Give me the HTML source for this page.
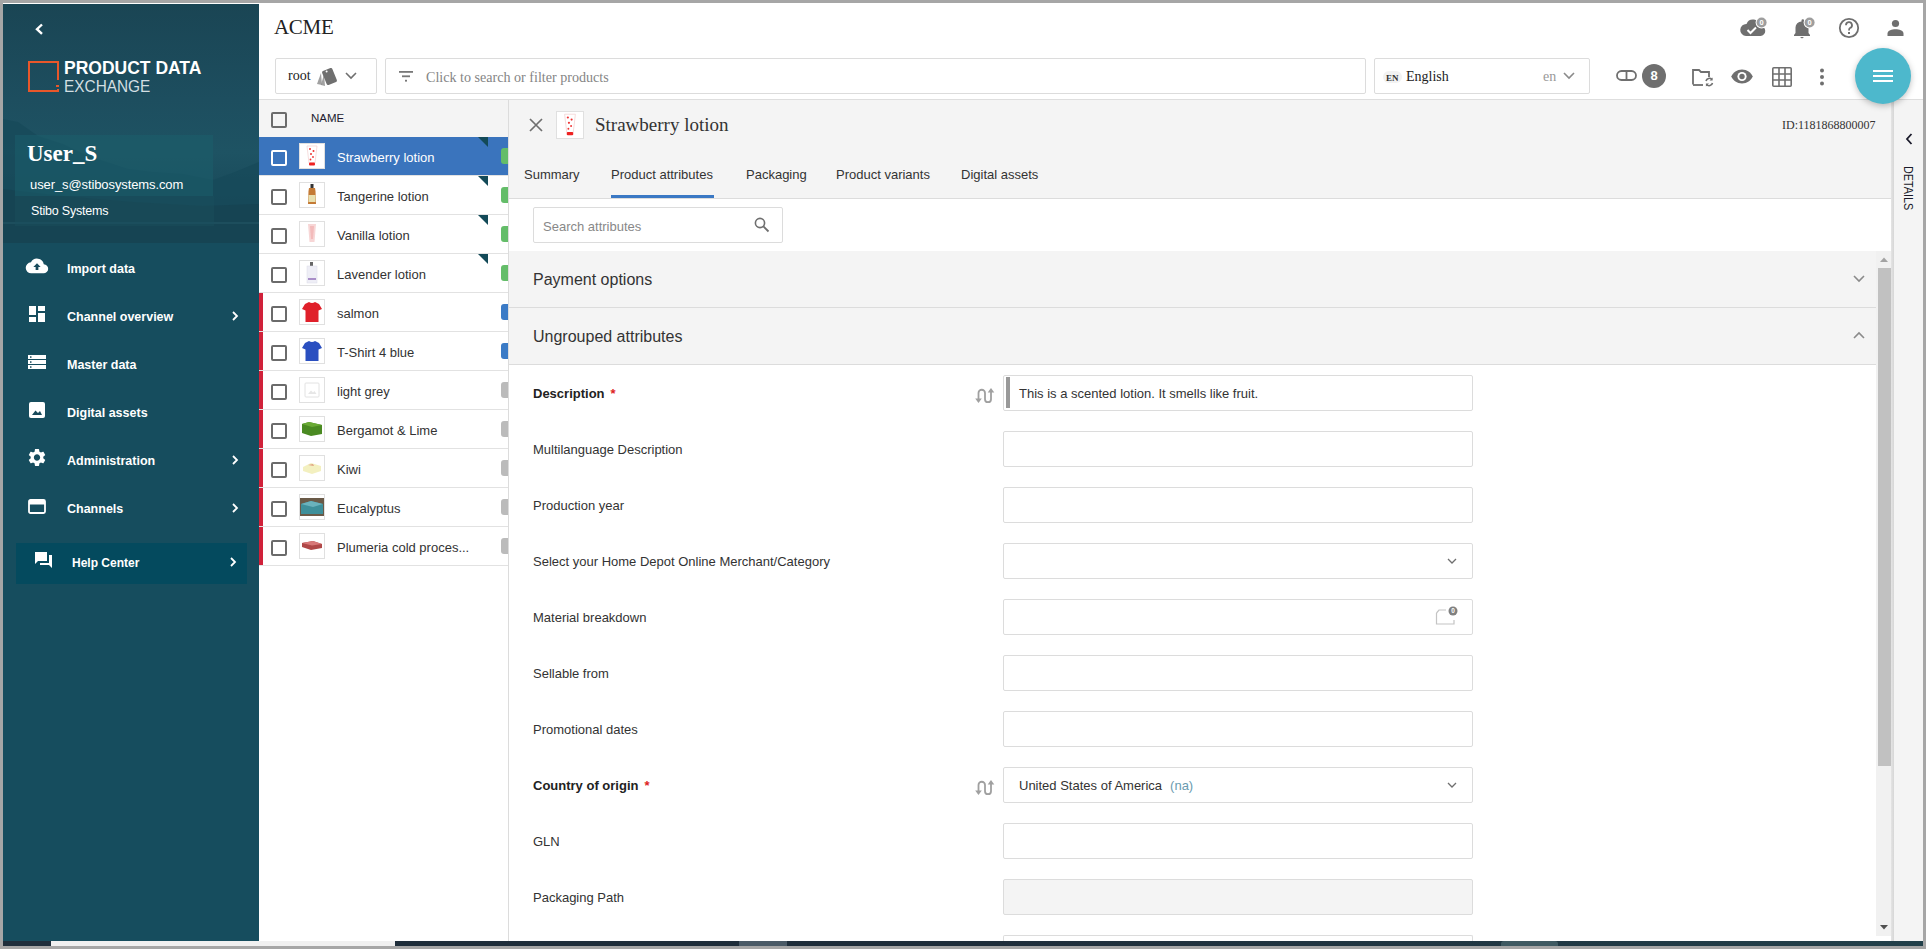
<!DOCTYPE html>
<html><head><meta charset="utf-8">
<style>
*{box-sizing:border-box;margin:0;padding:0}
html,body{width:1926px;height:949px;overflow:hidden;background:#a6a6a6}
body{position:relative;font-family:"Liberation Sans",sans-serif;color:#333}
.a{position:absolute;white-space:nowrap}
.serif{font-family:"Liberation Serif",serif}
svg{position:absolute;overflow:visible}
/* frame */
#pagebg{position:absolute;left:3px;top:3px;width:1920px;height:938px;background:#fff}
#side{position:absolute;left:3px;top:4px;width:256px;height:937px;background:#164d5e;overflow:hidden}
#taskbar{position:absolute;left:3px;top:941px;width:1920px;height:5px;background:#1f2e3b}
/* sidebar */
.nav{position:absolute;left:64px;color:#fff;font-weight:bold;font-size:12.5px;line-height:16px;margin-top:1px}
.chev{position:absolute;left:227px;width:10px;height:10px}
</style></head><body>
<div id="pagebg"></div>

<!-- SIDEBAR -->
<div id="side">
  <div class="a" style="left:0;top:0;width:256px;height:239px;background:linear-gradient(180deg,#1a4554 0%,#1d4e5f 40%,#1e5363 62%,#194a5a 82%,#18495a 100%)"></div>
  <svg style="left:0;top:0" width="256" height="239" viewBox="0 0 256 239">
    <path d="M0 115 L15 118 L35 132 L60 140 L85 152 L110 160 L125 165 L150 168 L180 170 L210 176 L232 168 L256 158 L256 239 L0 239 Z" fill="#17495a" opacity="0.75"/>
    <path d="M0 185 L60 192 L130 198 L200 202 L256 200 L256 239 L0 239 Z" fill="#163f4e" opacity="0.55"/>
    <rect x="0" y="218" width="256" height="2" fill="#2a6070" opacity="0.35"/>
    <rect x="12" y="131" width="198" height="61" fill="#1c5f6c" opacity="0.55"/>
    <rect x="12" y="192" width="199" height="30" fill="#1a4f5e" opacity="0.45"/>
  </svg>
  <!-- back chevron -->
  <svg style="left:32px;top:19px" width="10" height="14" viewBox="0 0 10 14"><path d="M7 1.5 L2 6.2 L7 10.9" stroke="#fff" stroke-width="2.4" fill="none"/></svg>
  <!-- logo -->
  <svg style="left:25px;top:57px" width="31" height="31" viewBox="0 0 31 31"><path d="M30 19 V1 H1 V30 H30 V28" stroke="#e8572a" stroke-width="2" fill="none"/><rect x="28" y="24" width="3" height="2" fill="#e8572a"/></svg>
  <div class="a" style="left:61px;top:54px;font-weight:bold;font-size:17.5px;color:#fff;line-height:20px;letter-spacing:0px">PRODUCT DATA</div>
  <div class="a" style="left:61px;top:72.5px;font-size:17px;color:#d3dfe2;line-height:20px;transform:scaleX(0.905);transform-origin:0 0">EXCHANGE</div>
  <div class="a serif" style="left:24px;top:137px;font-weight:bold;font-size:23px;color:#fff;line-height:26px">User_S</div>
  <div class="a" style="left:27px;top:173px;font-size:13px;color:#fff;line-height:16px;letter-spacing:-0.1px">user_s@stibosystems.com</div>
  <div class="a" style="left:28px;top:199px;font-size:12.5px;color:#fff;line-height:16px;letter-spacing:-0.2px">Stibo Systems</div>

  <!-- nav -->
  <svg style="left:23px;top:254px" width="22" height="16" viewBox="0 0 24 16"><path d="M19.4 6 A7.5 7.5 0 0 0 5.4 4 A6 6 0 0 0 6 16 L19 16 A5 5 0 0 0 19.4 6 Z" fill="#fff"/><path d="M12 5 L8 9 L10.5 9 L10.5 12.5 L13.5 12.5 L13.5 9 L16 9 Z" fill="#194b5c"/></svg>
  <div class="nav" style="top:256px">Import data</div>

  <svg style="left:26px;top:302px" width="16" height="16" viewBox="0 0 16 16"><rect x="0" y="0" width="7" height="9" fill="#fff"/><rect x="9" y="0" width="7" height="5" fill="#fff"/><rect x="0" y="11" width="7" height="5" fill="#fff"/><rect x="9" y="7" width="7" height="9" fill="#fff"/></svg>
  <div class="nav" style="top:304px">Channel overview</div>
  <svg class="chev" style="top:307px" viewBox="0 0 10 10"><path d="M3 1 L7 5 L3 9" stroke="#fff" stroke-width="1.8" fill="none"/></svg>

  <svg style="left:25px;top:351px" width="18" height="14" viewBox="0 0 18 14"><rect x="0" y="0" width="18" height="4" fill="#fff"/><rect x="0" y="5" width="18" height="4" fill="#fff"/><rect x="0" y="10" width="18" height="4" fill="#fff"/><rect x="2" y="1.3" width="1.5" height="1.5" fill="#194b5c"/><rect x="2" y="6.3" width="1.5" height="1.5" fill="#194b5c"/><rect x="2" y="11.3" width="1.5" height="1.5" fill="#194b5c"/></svg>
  <div class="nav" style="top:352px">Master data</div>

  <svg style="left:26px;top:398px" width="16" height="16" viewBox="0 0 16 16"><rect x="0" y="0" width="16" height="16" rx="2" fill="#fff"/><path d="M3 13 L6.5 8.5 L9 11 L11 9 L13 13 Z" fill="#194b5c"/></svg>
  <div class="nav" style="top:400px">Digital assets</div>

  <svg style="left:22.5px;top:443px" width="22" height="21" viewBox="0 0 24 24"><path fill="#fff" d="M19.14 12.94c.04-.3.06-.61.06-.94 0-.32-.02-.64-.07-.94l2.03-1.58a.49.49 0 0 0 .12-.61l-1.92-3.32a.488.488 0 0 0-.59-.22l-2.39.96c-.5-.38-1.03-.7-1.62-.94l-.36-2.54a.484.484 0 0 0-.48-.41h-3.84c-.24 0-.43.17-.47.41l-.36 2.54c-.59.24-1.13.57-1.62.94l-2.39-.96c-.22-.08-.47 0-.59.22L2.74 8.87c-.12.21-.08.47.12.61l2.03 1.58c-.05.3-.09.63-.09.94s.02.64.07.94l-2.03 1.58a.49.49 0 0 0-.12.61l1.92 3.32c.12.22.37.29.59.22l2.39-.96c.5.38 1.03.7 1.62.94l.36 2.54c.05.24.24.41.48.41h3.84c.24 0 .44-.17.47-.41l.36-2.54c.59-.24 1.13-.56 1.62-.94l2.39.96c.22.08.47 0 .59-.22l1.92-3.32c.12-.22.07-.47-.12-.61l-2.01-1.58zM12 15.6c-1.98 0-3.6-1.62-3.6-3.6s1.62-3.6 3.6-3.6 3.6 1.62 3.6 3.6-1.62 3.6-3.6 3.6z"/></svg>
  <div class="nav" style="top:448px">Administration</div>
  <svg class="chev" style="top:451px" viewBox="0 0 10 10"><path d="M3 1 L7 5 L3 9" stroke="#fff" stroke-width="1.8" fill="none"/></svg>

  <svg style="left:25px;top:495px" width="18" height="15" viewBox="0 0 18 15"><rect x="1" y="1" width="16" height="13" rx="1.5" stroke="#fff" stroke-width="1.8" fill="none"/><rect x="1" y="1" width="16" height="4.5" fill="#fff"/></svg>
  <div class="nav" style="top:496px">Channels</div>
  <svg class="chev" style="top:499px" viewBox="0 0 10 10"><path d="M3 1 L7 5 L3 9" stroke="#fff" stroke-width="1.8" fill="none"/></svg>

  <div class="a" style="left:13px;top:539px;width:231px;height:41px;background:#044a5e"></div>
  <svg style="left:32px;top:548px" width="17" height="16" viewBox="0 0 17 16"><path d="M0 0 H12 V9 H3 L0 12 Z" fill="#fff"/><path d="M14 3 H17 V16 L14 13 H5 V11 H14 Z" fill="#fff"/></svg>
  <div class="nav" style="left:69px;top:550px;font-size:12px">Help Center</div>
  <svg class="chev" style="top:553px;left:225px" viewBox="0 0 10 10"><path d="M3 1 L7 5 L3 9" stroke="#fff" stroke-width="1.8" fill="none"/></svg>
</div>


<!-- HEADER -->
<div class="a" style="left:259px;top:99px;width:1664px;height:1px;background:#dedede"></div>
<div class="a serif" style="left:274px;top:14px;font-size:21px;line-height:26px;color:#222;letter-spacing:-0.3px">ACME</div>
<!-- right top icons -->
<svg style="left:1740px;top:17px" width="28" height="22" viewBox="0 0 28 22">
  <path d="M20 9 A7 7 0 0 0 6.5 7 A5.5 5.5 0 0 0 6 19 L20.5 19 A5 5 0 0 0 20 9 Z" fill="#6f6f6f"/>
  <path d="M7.5 13 L10.5 16 L16 10.5" stroke="#fff" stroke-width="2" fill="none"/>
  <circle cx="21.6" cy="5.5" r="6" fill="#fff"/>
  <circle cx="21.6" cy="5.5" r="5" fill="#9e9e9e"/>
  <text x="21.6" y="8.3" font-size="7.5" fill="#fff" text-anchor="middle" font-family="Liberation Sans" font-weight="bold">0</text>
</svg>
<svg style="left:1792px;top:17px" width="26" height="22" viewBox="0 0 26 22">
  <path d="M9 2.5 A1.3 1.3 0 0 1 11.6 2.5 L11.6 3.5 A6 6 0 0 1 16 9.5 L16 15 L17.5 17 L17.5 18 L1.5 18 L1.5 17 L3 15 L3 9.5 A6 6 0 0 1 9 3.5 Z" fill="#6f6f6f" transform="translate(0.5,1)"/>
  <path d="M8 20 L12 20 L10 21.5 Z" fill="#6f6f6f"/>
  <circle cx="17.6" cy="5.5" r="6" fill="#fff"/>
  <circle cx="17.6" cy="5.5" r="5" fill="#9e9e9e"/>
  <text x="17.6" y="8.3" font-size="7.5" fill="#fff" text-anchor="middle" font-family="Liberation Sans" font-weight="bold">0</text>
</svg>
<svg style="left:1838px;top:17px" width="22" height="22" viewBox="0 0 22 22">
  <circle cx="11" cy="11" r="9.2" stroke="#6f6f6f" stroke-width="1.8" fill="none"/>
  <path d="M8 8.3 A3 3 0 1 1 12 11 C11 11.6 11 12.3 11 13.5" stroke="#6f6f6f" stroke-width="1.8" fill="none"/>
  <rect x="10" y="15" width="2" height="2" fill="#6f6f6f"/>
</svg>
<svg style="left:1887px;top:19px" width="18" height="18" viewBox="0 0 18 18">
  <circle cx="8.5" cy="4.5" r="3.6" fill="#6f6f6f"/>
  <path d="M0.5 17 L0.5 14.5 C0.5 11.5 5 10.2 8.5 10.2 C12 10.2 16.5 11.5 16.5 14.5 L16.5 17 Z" fill="#6f6f6f"/>
</svg>
<!-- toolbar -->
<div class="a" style="left:275px;top:58px;width:102px;height:36px;border:1px solid #dcdcdc;border-radius:2px;background:#fff"></div>
<div class="a serif" style="left:288px;top:68px;font-size:14px;line-height:16px;color:#222">root</div>
<svg style="left:316px;top:66px" width="22" height="21" viewBox="0 0 22 21">
  <path d="M1 18 L5 7 L6 19 Z" fill="#8a8a8a" opacity="0.8"/>
  <path d="M5 19 L8 8 L9 20 Z" fill="#8a8a8a" opacity="0.8"/>
  <rect x="8" y="3" width="11" height="15" rx="1.5" transform="rotate(-22 13.5 10.5)" fill="#6f6f6f"/>
  <circle cx="10.6" cy="5.4" r="1" fill="#fff"/>
</svg>
<svg style="left:345px;top:72px" width="12" height="8" viewBox="0 0 12 8"><path d="M1 1 L6 6 L11 1" stroke="#6f6f6f" stroke-width="1.6" fill="none"/></svg>
<div class="a" style="left:385px;top:58px;width:981px;height:36px;border:1px solid #dcdcdc;border-radius:2px;background:#fff"></div>
<svg style="left:399px;top:71px" width="14" height="11" viewBox="0 0 14 11"><rect x="0" y="0" width="14" height="1.8" fill="#787878"/><rect x="3" y="4.4" width="8" height="1.8" fill="#787878"/><rect x="6" y="8.8" width="2" height="1.8" fill="#787878"/></svg>
<div class="a serif" style="left:426px;top:69px;font-size:14.1px;line-height:16px;color:#858585">Click to search or filter products</div>
<div class="a" style="left:1374px;top:58px;width:216px;height:36px;border:1px solid #dcdcdc;border-radius:2px;background:#fff"></div>
<div class="a" style="left:1383px;top:71px;width:19px;height:12px;border-radius:6px;background:#f2f2f2"></div>
<div class="a serif" style="left:1386px;top:72px;font-size:9px;line-height:12px;color:#333;font-weight:bold">EN</div>
<div class="a serif" style="left:1406px;top:68px;font-size:14px;line-height:17px;color:#222">English</div>
<div class="a serif" style="left:1543px;top:68px;font-size:14px;line-height:17px;color:#999">en</div>
<svg style="left:1563px;top:72px" width="12" height="8" viewBox="0 0 12 8"><path d="M1 1 L6 6 L11 1" stroke="#8a8a8a" stroke-width="1.6" fill="none"/></svg>

<svg style="left:1616px;top:70px" width="21" height="11" viewBox="0 0 21 11"><rect x="1" y="1" width="19" height="9" rx="4.5" stroke="#6f6f6f" stroke-width="1.8" fill="none"/><rect x="9.6" y="1" width="1.8" height="9" fill="#6f6f6f"/></svg>
<div class="a" style="left:1642px;top:64px;width:24px;height:24px;border-radius:12px;background:#6f6f6f;color:#fff;font-weight:bold;font-size:13px;line-height:24px;text-align:center">8</div>
<svg style="left:1692px;top:68px" width="22" height="20" viewBox="0 0 22 20">
  <path d="M1 16.5 L1 2 L7 2 L9 4 L17 4 L17 9" stroke="#6f6f6f" stroke-width="1.8" fill="none"/>
  <path d="M1 17 L11 17" stroke="#6f6f6f" stroke-width="1.8"/>
  <path d="M14 13 A3.5 3.5 0 0 1 20 11.5 M20.5 15 A3.5 3.5 0 0 1 14.5 16.5" stroke="#6f6f6f" stroke-width="1.6" fill="none"/>
  <path d="M20.6 9.5 L20.6 12.6 L17.5 12.6 Z M13.9 18.5 L13.9 15.4 L17 15.4 Z" fill="#6f6f6f"/>
</svg>
<svg style="left:1731px;top:69px" width="22" height="15" viewBox="0 0 22 15">
  <path d="M11 0.5 C6 0.5 2 3.5 0.3 7.5 C2 11.5 6 14.5 11 14.5 C16 14.5 20 11.5 21.7 7.5 C20 3.5 16 0.5 11 0.5 Z" fill="#6f6f6f"/>
  <circle cx="11" cy="7.5" r="4.6" fill="#fff"/>
  <circle cx="11" cy="7.5" r="2.7" fill="#6f6f6f"/>
</svg>
<svg style="left:1772px;top:67px" width="20" height="20" viewBox="0 0 20 20">
  <rect x="0.8" y="0.8" width="18.4" height="18.4" rx="1" stroke="#6f6f6f" stroke-width="1.6" fill="none"/>
  <path d="M7 1 V19 M13 1 V19 M1 7 H19 M1 13 H19" stroke="#6f6f6f" stroke-width="1.6"/>
</svg>
<svg style="left:1819px;top:68px" width="6" height="18" viewBox="0 0 6 18"><circle cx="3" cy="2.5" r="2" fill="#6f6f6f"/><circle cx="3" cy="9" r="2" fill="#6f6f6f"/><circle cx="3" cy="15.5" r="2" fill="#6f6f6f"/></svg>

<!-- LIST -->
<div class="a" style="left:259px;top:100px;width:249px;height:37px;background:#f4f4f4"></div>
<div class="a" style="left:508px;top:100px;width:1px;height:841px;background:#dcdcdc"></div>
<div class="a" style="left:271px;top:112px;width:16px;height:16px;border:2px solid #6b6b6b;border-radius:2px"></div>
<div class="a" style="left:311px;top:111px;font-size:11.5px;line-height:14px;color:#221a2e">NAME</div>
<div class="a" style="left:259px;top:137px;width:249px;height:38px;background:#3a74bd"></div>
<div class="a" style="left:259px;top:175px;width:249px;height:1px;background:#e2e2e2"></div>
<div class="a" style="left:271px;top:150px;width:16px;height:16px;border:2px solid #fff;border-radius:2px"></div>
<div class="a" style="left:299px;top:143px;width:26px;height:26px;border:1px solid #e0e0e0;background:#fff"></div>
<svg style="left:299px;top:143px" width="26" height="26" viewBox="0 0 26 26"><path d="M8 3 L18 3 L16 20 L10 20 Z" fill="#fff" stroke="#f0c8c8" stroke-width="0.6"/><circle cx="11" cy="6" r="1" fill="#e33"/><circle cx="14.5" cy="8" r="1" fill="#e33"/><circle cx="12" cy="11" r="1" fill="#e33"/><circle cx="14" cy="14" r="0.9" fill="#e33"/><circle cx="11.5" cy="16.5" r="0.9" fill="#e33"/><rect x="10" y="19.5" width="6" height="3" rx="1" fill="#e22"/></svg>
<div class="a" style="left:337px;top:150px;font-size:13px;line-height:16px;color:#fff">Strawberry lotion</div>
<svg style="left:478px;top:137px" width="10" height="10" viewBox="0 0 10 10"><path d="M0 0 L10 0 L10 10 Z" fill="#134a58"/></svg>
<div class="a" style="left:501px;top:148px;width:7px;height:16px;background:#64bd69;border-radius:3px 0 0 3px"></div>
<div class="a" style="left:259px;top:176px;width:249px;height:38px;background:#fff"></div>
<div class="a" style="left:259px;top:214px;width:249px;height:1px;background:#e2e2e2"></div>
<div class="a" style="left:271px;top:189px;width:16px;height:16px;border:2px solid #6b6b6b;border-radius:2px"></div>
<div class="a" style="left:299px;top:182px;width:26px;height:26px;border:1px solid #e0e0e0;background:#fff"></div>
<svg style="left:299px;top:182px" width="26" height="26" viewBox="0 0 26 26"><rect x="11.5" y="2" width="3" height="4" fill="#333"/><path d="M10 6 L16 6 L16.5 9 L17 22 L9 22 L9.5 9 Z" fill="#c47a35"/><rect x="9.5" y="13" width="7" height="7" fill="#e8e0b0"/></svg>
<div class="a" style="left:337px;top:189px;font-size:13px;line-height:16px;color:#333">Tangerine lotion</div>
<svg style="left:478px;top:176px" width="10" height="10" viewBox="0 0 10 10"><path d="M0 0 L10 0 L10 10 Z" fill="#134a58"/></svg>
<div class="a" style="left:501px;top:187px;width:7px;height:16px;background:#64bd69;border-radius:3px 0 0 3px"></div>
<div class="a" style="left:259px;top:215px;width:249px;height:38px;background:#fff"></div>
<div class="a" style="left:259px;top:253px;width:249px;height:1px;background:#e2e2e2"></div>
<div class="a" style="left:271px;top:228px;width:16px;height:16px;border:2px solid #6b6b6b;border-radius:2px"></div>
<div class="a" style="left:299px;top:221px;width:26px;height:26px;border:1px solid #e0e0e0;background:#fff"></div>
<svg style="left:299px;top:221px" width="26" height="26" viewBox="0 0 26 26"><path d="M9 3 L17 3 L15.5 21 L10.5 21 Z" fill="#f7d6d6"/><path d="M11 5 L15 5 L14 18 L12 18 Z" fill="#f0a8a8" opacity="0.6"/></svg>
<div class="a" style="left:337px;top:228px;font-size:13px;line-height:16px;color:#333">Vanilla lotion</div>
<svg style="left:478px;top:215px" width="10" height="10" viewBox="0 0 10 10"><path d="M0 0 L10 0 L10 10 Z" fill="#134a58"/></svg>
<div class="a" style="left:501px;top:226px;width:7px;height:16px;background:#64bd69;border-radius:3px 0 0 3px"></div>
<div class="a" style="left:259px;top:254px;width:249px;height:38px;background:#fff"></div>
<div class="a" style="left:259px;top:292px;width:249px;height:1px;background:#e2e2e2"></div>
<div class="a" style="left:271px;top:267px;width:16px;height:16px;border:2px solid #6b6b6b;border-radius:2px"></div>
<div class="a" style="left:299px;top:260px;width:26px;height:26px;border:1px solid #e0e0e0;background:#fff"></div>
<svg style="left:299px;top:260px" width="26" height="26" viewBox="0 0 26 26"><rect x="11" y="2" width="3" height="4" fill="#666"/><rect x="8" y="6" width="10" height="17" fill="#eeeef6" stroke="#dcdce8" stroke-width="0.5"/><rect x="9" y="18" width="8" height="2" fill="#a98fc8"/></svg>
<div class="a" style="left:337px;top:267px;font-size:13px;line-height:16px;color:#333">Lavender lotion</div>
<svg style="left:478px;top:254px" width="10" height="10" viewBox="0 0 10 10"><path d="M0 0 L10 0 L10 10 Z" fill="#134a58"/></svg>
<div class="a" style="left:501px;top:265px;width:7px;height:16px;background:#64bd69;border-radius:3px 0 0 3px"></div>
<div class="a" style="left:259px;top:293px;width:249px;height:38px;background:#fff"></div>
<div class="a" style="left:259px;top:331px;width:249px;height:1px;background:#e2e2e2"></div>
<div class="a" style="left:259px;top:293px;width:4px;height:38px;background:#d0213a"></div>
<div class="a" style="left:271px;top:306px;width:16px;height:16px;border:2px solid #6b6b6b;border-radius:2px"></div>
<div class="a" style="left:299px;top:299px;width:26px;height:26px;border:1px solid #e0e0e0;background:#fff"></div>
<svg style="left:299px;top:299px" width="26" height="26" viewBox="0 0 26 26"><path d="M6 5 L10 3 Q13 5 16 3 L20 5 L23 10 L19.5 11.5 L19.5 23 L6.5 23 L6.5 11.5 L3 10 Z" fill="#e0202a"/></svg>
<div class="a" style="left:337px;top:306px;font-size:13px;line-height:16px;color:#333">salmon</div>
<div class="a" style="left:501px;top:304px;width:7px;height:16px;background:#3b7bc6;border-radius:3px 0 0 3px"></div>
<div class="a" style="left:259px;top:332px;width:249px;height:38px;background:#fff"></div>
<div class="a" style="left:259px;top:370px;width:249px;height:1px;background:#e2e2e2"></div>
<div class="a" style="left:259px;top:332px;width:4px;height:38px;background:#d0213a"></div>
<div class="a" style="left:271px;top:345px;width:16px;height:16px;border:2px solid #6b6b6b;border-radius:2px"></div>
<div class="a" style="left:299px;top:338px;width:26px;height:26px;border:1px solid #e0e0e0;background:#fff"></div>
<svg style="left:299px;top:338px" width="26" height="26" viewBox="0 0 26 26"><path d="M6 5 L10 3 Q13 5 16 3 L20 5 L23 10 L19.5 11.5 L19.5 23 L6.5 23 L6.5 11.5 L3 10 Z" fill="#2a4fc0"/></svg>
<div class="a" style="left:337px;top:345px;font-size:13px;line-height:16px;color:#333">T-Shirt 4 blue</div>
<div class="a" style="left:501px;top:343px;width:7px;height:16px;background:#3b7bc6;border-radius:3px 0 0 3px"></div>
<div class="a" style="left:259px;top:371px;width:249px;height:38px;background:#fff"></div>
<div class="a" style="left:259px;top:409px;width:249px;height:1px;background:#e2e2e2"></div>
<div class="a" style="left:259px;top:371px;width:4px;height:38px;background:#d0213a"></div>
<div class="a" style="left:271px;top:384px;width:16px;height:16px;border:2px solid #6b6b6b;border-radius:2px"></div>
<div class="a" style="left:299px;top:377px;width:26px;height:26px;border:1px solid #e0e0e0;background:#fff"></div>
<svg style="left:299px;top:377px" width="26" height="26" viewBox="0 0 26 26"><rect x="6" y="6" width="14" height="14" rx="1" fill="none" stroke="#e2e2e2" stroke-width="1"/><path d="M9 17 L12 13.5 L14 15.5 L15.5 14 L17.5 17 Z" fill="#e6e6e6"/></svg>
<div class="a" style="left:337px;top:384px;font-size:13px;line-height:16px;color:#333">light grey</div>
<div class="a" style="left:501px;top:382px;width:7px;height:16px;background:#bbbbbb;border-radius:3px 0 0 3px"></div>
<div class="a" style="left:259px;top:410px;width:249px;height:38px;background:#fff"></div>
<div class="a" style="left:259px;top:448px;width:249px;height:1px;background:#e2e2e2"></div>
<div class="a" style="left:259px;top:410px;width:4px;height:38px;background:#d0213a"></div>
<div class="a" style="left:271px;top:423px;width:16px;height:16px;border:2px solid #6b6b6b;border-radius:2px"></div>
<div class="a" style="left:299px;top:416px;width:26px;height:26px;border:1px solid #e0e0e0;background:#fff"></div>
<svg style="left:299px;top:416px" width="26" height="26" viewBox="0 0 26 26"><path d="M3 8 L10 6 L23 9 L23 18 L12 20 L3 17 Z" fill="#4a8a22"/><path d="M3 8 L10 6 L23 9 L13 11 Z" fill="#6aaa35"/></svg>
<div class="a" style="left:337px;top:423px;font-size:13px;line-height:16px;color:#333">Bergamot &amp; Lime</div>
<div class="a" style="left:501px;top:421px;width:7px;height:16px;background:#bbbbbb;border-radius:3px 0 0 3px"></div>
<div class="a" style="left:259px;top:449px;width:249px;height:38px;background:#fff"></div>
<div class="a" style="left:259px;top:487px;width:249px;height:1px;background:#e2e2e2"></div>
<div class="a" style="left:259px;top:449px;width:4px;height:38px;background:#d0213a"></div>
<div class="a" style="left:271px;top:462px;width:16px;height:16px;border:2px solid #6b6b6b;border-radius:2px"></div>
<div class="a" style="left:299px;top:455px;width:26px;height:26px;border:1px solid #e0e0e0;background:#fff"></div>
<svg style="left:299px;top:455px" width="26" height="26" viewBox="0 0 26 26"><path d="M4 12 L12 8 L22 11 L22 16 L13 19 L4 16 Z" fill="#f3f0c0"/><path d="M9 10 L14 9 L15 11 Z" fill="#e0a080"/></svg>
<div class="a" style="left:337px;top:462px;font-size:13px;line-height:16px;color:#333">Kiwi</div>
<div class="a" style="left:501px;top:460px;width:7px;height:16px;background:#bbbbbb;border-radius:3px 0 0 3px"></div>
<div class="a" style="left:259px;top:488px;width:249px;height:38px;background:#fff"></div>
<div class="a" style="left:259px;top:526px;width:249px;height:1px;background:#e2e2e2"></div>
<div class="a" style="left:259px;top:488px;width:4px;height:38px;background:#d0213a"></div>
<div class="a" style="left:271px;top:501px;width:16px;height:16px;border:2px solid #6b6b6b;border-radius:2px"></div>
<div class="a" style="left:299px;top:494px;width:26px;height:26px;border:1px solid #e0e0e0;background:#fff"></div>
<svg style="left:299px;top:494px" width="26" height="26" viewBox="0 0 26 26"><rect x="1" y="4" width="24" height="18" fill="#6a5a48"/><path d="M2 10 L12 7 L24 10 L24 20 L2 20 Z" fill="#3e8f9a"/><path d="M2 10 L12 7 L24 10 L14 13 Z" fill="#6ab2bc"/></svg>
<div class="a" style="left:337px;top:501px;font-size:13px;line-height:16px;color:#333">Eucalyptus</div>
<div class="a" style="left:501px;top:499px;width:7px;height:16px;background:#bbbbbb;border-radius:3px 0 0 3px"></div>
<div class="a" style="left:259px;top:527px;width:249px;height:38px;background:#fff"></div>
<div class="a" style="left:259px;top:565px;width:249px;height:1px;background:#e2e2e2"></div>
<div class="a" style="left:259px;top:527px;width:4px;height:38px;background:#d0213a"></div>
<div class="a" style="left:271px;top:540px;width:16px;height:16px;border:2px solid #6b6b6b;border-radius:2px"></div>
<div class="a" style="left:299px;top:533px;width:26px;height:26px;border:1px solid #e0e0e0;background:#fff"></div>
<svg style="left:299px;top:533px" width="26" height="26" viewBox="0 0 26 26"><path d="M3 10 L14 8 L23 11 L23 15 L12 17 L3 14 Z" fill="#b04848"/><path d="M3 10 L14 8 L23 11 L13 12.5 Z" fill="#d87878"/></svg>
<div class="a" style="left:337px;top:540px;font-size:13px;line-height:16px;color:#333">Plumeria cold proces...</div>
<div class="a" style="left:501px;top:538px;width:7px;height:16px;background:#bbbbbb;border-radius:3px 0 0 3px"></div>

<!-- DETAIL -->
<div class="a" style="left:509px;top:100px;width:1383px;height:98px;background:#f4f4f4"></div>
<div class="a" style="left:509px;top:198px;width:1383px;height:1px;background:#dcdcdc"></div>
<svg style="left:529px;top:118px" width="14" height="14" viewBox="0 0 14 14"><path d="M1 1 L13 13 M13 1 L1 13" stroke="#6f6f6f" stroke-width="1.7"/></svg>
<div class="a" style="left:556px;top:111px;width:28px;height:28px;border:1px solid #e0e0e0;background:#fff"></div>
<svg style="left:556px;top:111px" width="28" height="28" viewBox="0 0 26 26"><path d="M8 3 L18 3 L16 20 L10 20 Z" fill="#fff" stroke="#f0c8c8" stroke-width="0.6"/><circle cx="11" cy="6" r="1" fill="#e33"/><circle cx="14.5" cy="8" r="1" fill="#e33"/><circle cx="12" cy="11" r="1" fill="#e33"/><circle cx="14" cy="14" r="0.9" fill="#e33"/><circle cx="11.5" cy="16.5" r="0.9" fill="#e33"/><rect x="10" y="19.5" width="6" height="3" rx="1" fill="#e22"/></svg>
<div class="a serif" style="left:595px;top:114px;font-size:19px;line-height:22px;color:#333">Strawberry lotion</div>
<div class="a serif" style="left:1782px;top:118px;font-size:12px;line-height:15px;color:#333">ID:1181868800007</div>

<div class="a" style="left:524px;top:167px;font-size:13px;line-height:16px;color:#333">Summary</div>
<div class="a" style="left:611px;top:167px;font-size:13px;line-height:16px;color:#333">Product attributes</div>
<div class="a" style="left:611px;top:195px;width:103px;height:3px;background:#3a78c4"></div>
<div class="a" style="left:746px;top:167px;font-size:13px;line-height:16px;color:#333">Packaging</div>
<div class="a" style="left:836px;top:167px;font-size:13px;line-height:16px;color:#333">Product variants</div>
<div class="a" style="left:961px;top:167px;font-size:13px;line-height:16px;color:#333">Digital assets</div>

<div class="a" style="left:533px;top:207px;width:250px;height:36px;border:1px solid #dcdcdc;border-radius:2px;background:#fff"></div>
<div class="a" style="left:543px;top:219px;font-size:13px;line-height:16px;color:#888">Search attributes</div>
<svg style="left:754px;top:217px" width="16" height="16" viewBox="0 0 16 16"><circle cx="6" cy="6" r="4.6" stroke="#6f6f6f" stroke-width="1.6" fill="none"/><path d="M9.4 9.4 L14.5 14.5" stroke="#6f6f6f" stroke-width="1.8"/></svg>

<div class="a" style="left:509px;top:251px;width:1367px;height:56px;background:#f4f4f4"></div>
<div class="a" style="left:509px;top:307px;width:1367px;height:1px;background:#dcdcdc"></div>
<div class="a" style="left:533px;top:270px;font-size:16px;line-height:19px;color:#333">Payment options</div>
<svg style="left:1853px;top:275px" width="12" height="8" viewBox="0 0 12 8"><path d="M1 1 L6 6 L11 1" stroke="#8a8a8a" stroke-width="1.6" fill="none"/></svg>
<div class="a" style="left:509px;top:308px;width:1367px;height:56px;background:#f4f4f4"></div>
<div class="a" style="left:509px;top:364px;width:1367px;height:1px;background:#dcdcdc"></div>
<div class="a" style="left:533px;top:327px;font-size:16px;line-height:19px;color:#333">Ungrouped attributes</div>
<svg style="left:1853px;top:331px" width="12" height="8" viewBox="0 0 12 8"><path d="M1 7 L6 2 L11 7" stroke="#8a8a8a" stroke-width="1.6" fill="none"/></svg>

<!-- scrollbar -->
<div class="a" style="left:1876px;top:251px;width:15px;height:685px;background:#f1f1f1"></div>
<svg style="left:1880px;top:257px" width="8" height="5" viewBox="0 0 8 5"><path d="M0 5 L4 0.5 L8 5 Z" fill="#a3a3a3"/></svg>
<div class="a" style="left:1878px;top:268px;width:13px;height:498px;background:#c1c1c1"></div>
<svg style="left:1880px;top:925px" width="8" height="5" viewBox="0 0 8 5"><path d="M0 0 L8 0 L4 4.5 Z" fill="#505050"/></svg>
<div class="a" style="left:1891px;top:100px;width:3px;height:841px;background:linear-gradient(90deg,#e4e4e4,#d6d6d6)"></div>
<div class="a" style="left:1894px;top:100px;width:29px;height:841px;background:#f4f4f4"></div>
<svg style="left:1905px;top:133px" width="8" height="12" viewBox="0 0 8 12"><path d="M6.5 1 L2 6 L6.5 11" stroke="#1a1a2a" stroke-width="1.8" fill="none"/></svg>
<div class="a" style="left:1914px;top:166px;font-size:12.6px;line-height:13px;color:#1a1a2a;transform:rotate(90deg) scaleX(0.855);transform-origin:0 0">DETAILS</div>

<!-- FAB -->
<div class="a" style="left:1855px;top:48px;width:56px;height:56px;border-radius:28px;background:#4db8cc;box-shadow:0 2px 6px rgba(0,0,0,0.25)"></div>
<svg style="left:1873px;top:70px" width="20" height="12" viewBox="0 0 20 12"><rect x="0" y="0" width="20" height="2" fill="#fff"/><rect x="0" y="5" width="20" height="2" fill="#fff"/><rect x="0" y="10" width="20" height="2" fill="#fff"/></svg>
<div class="a" style="left:533px;top:386px;font-size:13px;line-height:16px;color:#222;font-weight:bold">Description<span style="color:#d22;margin-left:6px;font-weight:bold">*</span></div>
<div class="a" style="left:1003px;top:375px;width:470px;height:36px;border:1px solid #dcdcdc;border-radius:2px;background:#fff"></div>
<svg style="left:975px;top:388px" width="19" height="16" viewBox="0 0 19 16"><path d="M3.5 11 V5 A3.25 3.25 0 0 1 10 5 V11.2 A3 3 0 0 0 16 11.2 V4" stroke="#a0a0a0" stroke-width="1.8" fill="none"/><path d="M0.2 10.4 L6.8 10.4 L3.5 15 Z" fill="#a0a0a0"/><path d="M12.7 4.6 L19.3 4.6 L16 0 Z" fill="#a0a0a0"/></svg>
<div class="a" style="left:1006px;top:377px;width:4px;height:31px;background:#999"></div>
<div class="a" style="left:1019px;top:386px;font-size:13px;line-height:16px;color:#333">This is a scented lotion. It smells like fruit.</div>
<div class="a" style="left:533px;top:442px;font-size:13px;line-height:16px;color:#333;font-weight:normal">Multilanguage Description</div>
<div class="a" style="left:1003px;top:431px;width:470px;height:36px;border:1px solid #dcdcdc;border-radius:2px;background:#fff"></div>
<div class="a" style="left:533px;top:498px;font-size:13px;line-height:16px;color:#333;font-weight:normal">Production year</div>
<div class="a" style="left:1003px;top:487px;width:470px;height:36px;border:1px solid #dcdcdc;border-radius:2px;background:#fff"></div>
<div class="a" style="left:533px;top:554px;font-size:13px;line-height:16px;color:#333;font-weight:normal">Select your Home Depot Online Merchant/Category</div>
<div class="a" style="left:1003px;top:543px;width:470px;height:36px;border:1px solid #dcdcdc;border-radius:2px;background:#fff"></div>
<svg style="left:1447px;top:558px" width="10" height="6" viewBox="0 0 10 6"><path d="M1 1 L5 5 L9 1" stroke="#6f6f6f" stroke-width="1.3" fill="none"/></svg>
<div class="a" style="left:533px;top:610px;font-size:13px;line-height:16px;color:#333;font-weight:normal">Material breakdown</div>
<div class="a" style="left:1003px;top:599px;width:470px;height:36px;border:1px solid #dcdcdc;border-radius:2px;background:#fff"></div>
<svg style="left:1435px;top:604px" width="26" height="22" viewBox="0 0 26 22"><path d="M1.5 9 L1.5 20 L19 20 L19 16" stroke="#c4c4c4" stroke-width="1.2" fill="none"/><path d="M1.5 9 L4 6 L11 6" stroke="#c4c4c4" stroke-width="1.2" fill="none"/><circle cx="18" cy="7" r="5.2" fill="#fff"/><circle cx="18" cy="7" r="4.5" fill="#808080"/><text x="18" y="9.4" font-size="6.5" fill="#fff" text-anchor="middle" font-family="Liberation Sans" font-weight="bold">0</text></svg>
<div class="a" style="left:533px;top:666px;font-size:13px;line-height:16px;color:#333;font-weight:normal">Sellable from</div>
<div class="a" style="left:1003px;top:655px;width:470px;height:36px;border:1px solid #dcdcdc;border-radius:2px;background:#fff"></div>
<div class="a" style="left:533px;top:722px;font-size:13px;line-height:16px;color:#333;font-weight:normal">Promotional dates</div>
<div class="a" style="left:1003px;top:711px;width:470px;height:36px;border:1px solid #dcdcdc;border-radius:2px;background:#fff"></div>
<div class="a" style="left:533px;top:778px;font-size:13px;line-height:16px;color:#222;font-weight:bold">Country of origin<span style="color:#d22;margin-left:6px;font-weight:bold">*</span></div>
<div class="a" style="left:1003px;top:767px;width:470px;height:36px;border:1px solid #dcdcdc;border-radius:2px;background:#fff"></div>
<svg style="left:975px;top:780px" width="19" height="16" viewBox="0 0 19 16"><path d="M3.5 11 V5 A3.25 3.25 0 0 1 10 5 V11.2 A3 3 0 0 0 16 11.2 V4" stroke="#a0a0a0" stroke-width="1.8" fill="none"/><path d="M0.2 10.4 L6.8 10.4 L3.5 15 Z" fill="#a0a0a0"/><path d="M12.7 4.6 L19.3 4.6 L16 0 Z" fill="#a0a0a0"/></svg>
<div class="a" style="left:1019px;top:778px;font-size:13px;line-height:16px;color:#333">United States of America<span style="color:#6a9bb0;margin-left:8px">(na)</span></div>
<svg style="left:1447px;top:782px" width="10" height="6" viewBox="0 0 10 6"><path d="M1 1 L5 5 L9 1" stroke="#6f6f6f" stroke-width="1.3" fill="none"/></svg>
<div class="a" style="left:533px;top:834px;font-size:13px;line-height:16px;color:#333;font-weight:normal">GLN</div>
<div class="a" style="left:1003px;top:823px;width:470px;height:36px;border:1px solid #dcdcdc;border-radius:2px;background:#fff"></div>
<div class="a" style="left:533px;top:890px;font-size:13px;line-height:16px;color:#333;font-weight:normal">Packaging Path</div>
<div class="a" style="left:1003px;top:879px;width:470px;height:36px;border:1px solid #dcdcdc;border-radius:2px;background:#f4f4f4"></div>
<div class="a" style="left:1003px;top:935px;width:470px;height:8px;border:1px solid #dcdcdc;border-bottom:none;border-radius:2px 2px 0 0;background:#fff"></div>
<div id="taskbar"></div>
<div class="a" style="left:51px;top:941px;width:344px;height:5px;background:#f0f0f0"></div>
<div class="a" style="left:739px;top:941px;width:48px;height:5px;background:#4a5a66"></div>
<div class="a" style="left:1000px;top:941px;width:923px;height:5px;background:linear-gradient(90deg,#1f2e3b,#22404a)"></div>
<div class="a" style="left:1501px;top:941px;width:57px;height:5px;background:#3f5a62;border-radius:3px 3px 0 0"></div>
<div class="a" style="left:0;top:946px;width:1926px;height:3px;background:#a6a6a6"></div>
</body></html>
